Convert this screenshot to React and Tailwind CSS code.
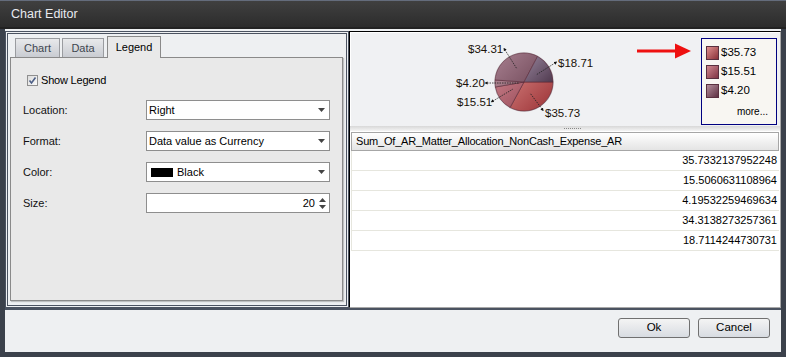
import React from 'react';

const slices = [
  { value: 35.73, id: 's1', from: '#e89c98', to: '#9a3034' },
  { value: 15.51, id: 's2', from: '#d8909a', to: '#843644' },
  { value: 4.2, id: 's3', from: '#c09aa6', to: '#6a3646' },
  { value: 34.31, id: 's4', from: '#a88090', to: '#573040' },
  { value: 18.71, id: 's5', from: '#c0b0c8', to: '#2a1226' },
];

const labels = [
  { text: '$34.31', x: 117, y: 20, line: [154, 17, 166, 36] },
  { text: '$18.71', x: 207, y: 34, line: [204, 30, 185, 42] },
  { text: '$4.20', x: 105, y: 54, line: [136, 50, 168, 50] },
  { text: '$15.51', x: 106, y: 73, line: [142, 68, 162, 56] },
  { text: '$35.73', x: 194, y: 84, line: [191, 76, 179, 60] },
];

const rows = ['35.7332137952248', '15.5060631108964', '4.19532259469634', '34.3138273257361', '18.7114244730731'];

const legendItems = [
  { text: '$35.73', from: '#e09090', to: '#8a3038' },
  { text: '$15.51', from: '#d08890', to: '#803444' },
  { text: '$4.20', from: '#b48e9c', to: '#5e3042' },
];

function piePaths(cx, cy, r) {
  const total = slices.reduce((s, x) => s + x.value, 0);
  let a = 0;
  return slices.map((s) => {
    const a0 = a;
    const a1 = a + (s.value / total) * Math.PI * 2;
    a = a1;
    const x0 = cx + r * Math.cos(a0);
    const y0 = cy + r * Math.sin(a0);
    const x1 = cx + r * Math.cos(a1);
    const y1 = cy + r * Math.sin(a1);
    const large = a1 - a0 > Math.PI ? 1 : 0;
    return { ...s, d: `M${cx} ${cy} L${x0} ${y0} A${r} ${r} 0 ${large} 1 ${x1} ${y1} Z` };
  });
}

const Caret = () => (
  <svg width="7" height="4" viewBox="0 0 7 4" className="shrink-0">
    <path d="M0 0 H7 L3.5 4 Z" fill="#444" />
  </svg>
);

const Select = ({ children }) => (
  <div className="w-[184px] h-[20px] border border-[#8e8e8e] bg-white flex items-center pl-[2px] pr-[4px]">
    <div className="flex-1 flex items-center text-[11px] text-black">{children}</div>
    <Caret />
  </div>
);

const FormRow = ({ label, children }) => (
  <div className="flex items-center h-[20px]">
    <div className="w-[123px] text-[11px] text-[#111]">{label}</div>
    {children}
  </div>
);

const Chart = () => {
  const cx = 173;
  const cy = 49;
  const r = 29;
  const paths = piePaths(cx, cy, r);
  return (
    <svg width="345" height="94" viewBox="0 0 345 94" className="shrink-0">
      <defs>
        {paths.map((p) => (
          <linearGradient key={p.id} id={p.id} gradientUnits="userSpaceOnUse" x1={cx - r} y1={cy - r} x2={cx + r} y2={cy + r}>
            <stop offset="0" stopColor={p.from} />
            <stop offset="1" stopColor={p.to} />
          </linearGradient>
        ))}
        <marker id="tip" viewBox="0 0 6 6" refX="1" refY="3" markerWidth="4" markerHeight="4" orient="auto-start-reverse">
          <path d="M0 0 L6 3 L0 6 Z" fill="#111" />
        </marker>
      </defs>
      <circle cx={cx} cy={cy} r={r + 0.8} fill="#c8c4c8" />
      {paths.map((p) => (
        <path key={p.id} d={p.d} fill={`url(#${p.id})`} stroke="#5a2838" strokeWidth="0.6" />
      ))}
      {labels.map((l) => (
        <g key={l.text}>
          <line x1={l.line[0]} y1={l.line[1]} x2={l.line[2]} y2={l.line[3]} stroke="#222" strokeWidth="0.8" strokeDasharray="1.5 1" markerStart="url(#tip)" />
          <text x={l.x} y={l.y} fontSize="11.5" fill="#1a1208" fontFamily="'Liberation Sans', Arial, sans-serif">
            {l.text}
          </text>
        </g>
      ))}
      <line x1="286" y1="18" x2="326" y2="18" stroke="#ee1010" strokeWidth="3" />
      <path d="M324 10.5 L340 18 L324 25.5 Z" fill="#ee1010" />
    </svg>
  );
};

export default function App() {
  return (
    <div className="w-[786px] h-[357px] bg-[#3b414b] flex flex-col font-['Liberation_Sans',Arial,sans-serif] overflow-hidden">
      {/* Title bar */}
      <div className="h-[29px] shrink-0 border-t border-[#646c7c] border-b-2 border-b-[#222] bg-gradient-to-b from-[#404040] to-[#2c2c2c] flex items-center pl-[11px]">
        <span className="text-[12.5px] text-[#e8eaf0]">Chart Editor</span>
      </div>

      <div className="flex-1 flex flex-col pl-[5px] pr-[5px]">
        {/* Main area */}
        <div className="h-[279px] shrink-0 flex bg-[#eef0f2]">
          {/* Left panel */}
          <div className="w-[344px] shrink-0 mt-[2px] border border-[#4b5361] p-px flex">
            <div className="flex-1 border border-[#4b5361] flex flex-col pt-px pl-[2px] pr-[3px] pb-[4px]">
              {/* Tabs */}
              <div className="flex items-end pl-[5px] h-[22px] shrink-0">
                <div className="w-[45px] h-[19px] border border-b-0 border-[#9a9ca0] bg-gradient-to-b from-[#e8e9eb] to-[#c9ccd2] text-[11px] text-[#3e4650] flex items-center justify-center">
                  Chart
                </div>
                <div className="w-[42px] h-[19px] ml-[2px] border border-b-0 border-[#9a9ca0] bg-gradient-to-b from-[#e8e9eb] to-[#c9ccd2] text-[11px] text-[#3e4650] flex items-center justify-center">
                  Data
                </div>
                <div className="w-[54px] h-[22px] ml-[3px] -mb-px relative z-10 border border-b-0 border-[#8a8a8a] bg-[#e9e9e9] text-[11px] text-black flex items-center justify-center">
                  Legend
                </div>
              </div>
              {/* Tab content */}
              <div className="flex-1 border border-[#8a8a8a] bg-[#e9e9e9] shadow-[1px_1px_1px_rgba(0,0,0,0.2)] pl-[12px] pt-[17px] flex flex-col">
                <div className="flex items-center h-[11px] ml-[4px]">
                  <div className="w-[11px] h-[11px] border border-[#8f8f8f] bg-gradient-to-br from-[#dcdcdc] to-[#fafafa] flex items-center justify-center">
                    <svg width="9" height="9" viewBox="0 0 9 9">
                      <path d="M1.5 4.5 L3.5 7 L7.5 1.5" fill="none" stroke="#4d5f86" strokeWidth="1.6" />
                    </svg>
                  </div>
                  <span className="ml-[3px] text-[11px] text-black tracking-[-0.2px]">Show Legend</span>
                </div>
                <div className="mt-[14px] flex flex-col gap-[11px]">
                  <FormRow label="Location:">
                    <Select>Right</Select>
                  </FormRow>
                  <FormRow label="Format:">
                    <Select>Data value as Currency</Select>
                  </FormRow>
                  <FormRow label="Color:">
                    <Select>
                      <span className="w-[22px] h-[9px] bg-black ml-[2px] mr-[4px]" />
                      Black
                    </Select>
                  </FormRow>
                  <FormRow label="Size:">
                    <div className="w-[184px] h-[20px] border border-[#8e8e8e] bg-white flex items-center justify-end pr-[3px]">
                      <span className="text-[11px] text-black mr-[4px]">20</span>
                      <div className="flex flex-col gap-[3px]">
                        <svg width="7" height="4" viewBox="0 0 7 4">
                          <path d="M0 4 H7 L3.5 0 Z" fill="#444" />
                        </svg>
                        <svg width="7" height="4" viewBox="0 0 7 4">
                          <path d="M0 0 H7 L3.5 4 Z" fill="#444" />
                        </svg>
                      </div>
                    </div>
                  </FormRow>
                </div>
              </div>
            </div>
          </div>

          {/* Right panel */}
          <div className="flex-1 mt-[2px] border-l border-t border-black border-r border-b border-r-[#a8a8a8] border-b-[#a8a8a8] flex flex-col bg-white">
            <div className="h-[94px] shrink-0 bg-[#f0f1f3] border-l border-t border-white flex items-start">
              <Chart />
              <div className="ml-[5px] mt-[5px] w-[76px] h-[87px] border border-[#000080] bg-[#f8f6f2] flex flex-col pl-[4px] pt-[4px]">
                {legendItems.map((it) => (
                  <div key={it.text} className="flex items-center h-[19px]">
                    <div
                      className="w-[13px] h-[14px] border border-[#5a3040]"
                      style={{ background: `linear-gradient(135deg, ${it.from}, ${it.to})` }}
                    />
                    <span className="ml-[2px] text-[11.5px] text-black leading-none">{it.text}</span>
                  </div>
                ))}
                <div className="mt-auto mb-[5px] pr-[8px] text-right text-[10px] text-black">more...</div>
              </div>
            </div>
            {/* Splitter */}
            <div className="h-[5px] shrink-0 bg-gradient-to-b from-[#d8d8d8] to-[#f4f4f4] flex justify-center items-center">
              <div className="ml-[14px] w-[17px] border-t border-dotted border-[#888]" />
            </div>
            {/* Table */}
            <div className="flex-1 bg-white pl-px pr-px pt-px">
              <div className="h-[19px] border border-[#a6a6a6] bg-gradient-to-b from-[#ffffff] to-[#e4e4e4] flex items-center pl-[4px] text-[11px] text-black tracking-[-0.2px]">
                Sum_Of_AR_Matter_Allocation_NonCash_Expense_AR
              </div>
              {rows.map((v) => (
                <div key={v} className="h-[20px] border-b border-l border-[#e6e6de] flex items-center justify-end pr-[2px] text-[11px] text-black">
                  {v}
                </div>
              ))}
            </div>
          </div>
        </div>

        <div className="h-[2px] shrink-0 bg-[#4b5361]" />

        {/* Bottom bar */}
        <div className="h-[42px] shrink-0 bg-[#eef0f2] flex justify-end items-start pt-[8px] pr-[11px] gap-[8px]">
          <button className="w-[72px] h-[20px] rounded-[3px] border border-[#707070] bg-gradient-to-b from-[#f4f4f4] to-[#d8dce2] text-[11.5px] text-black">
            Ok
          </button>
          <button className="w-[72px] h-[20px] rounded-[3px] border border-[#707070] bg-gradient-to-b from-[#f4f4f4] to-[#d8dce2] text-[11.5px] text-black">
            Cancel
          </button>
        </div>
      </div>
    </div>
  );
}
